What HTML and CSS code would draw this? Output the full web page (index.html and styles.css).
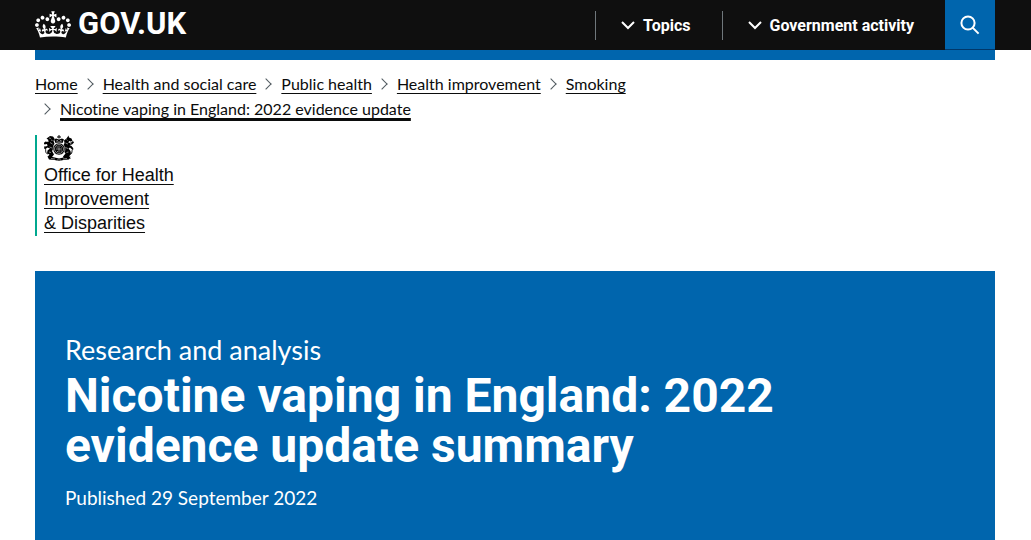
FILE: index.html
```
<!DOCTYPE html>
<html lang="en">
<head>
  <meta charset="UTF-8">
  <meta name="viewport" content="width=device-width, initial-scale=1.0">
  <title>Nicotine vaping in England: 2022 evidence update summary - GOV.UK</title>
  <link rel="stylesheet" href="styles.css">
</head>
<body>
  <header class="header">
    <div class="container header-inner">
      <a class="logo" href="#">
        <svg class="crown" viewBox="0 0 132 97" aria-hidden="true">
          <path fill="currentColor" fill-rule="evenodd" d="M25 30.2c3.5 1.5 7.7-.2 9.1-3.7 1.5-3.6-.2-7.8-3.9-9.2-3.6-1.4-7.6.3-9.1 3.9-1.4 3.5.3 7.5 3.9 9zM9 39.5c3.6 1.5 7.8-.2 9.2-3.7 1.5-3.6-.2-7.8-3.9-9.1-3.6-1.5-7.6.2-9.1 3.8-1.4 3.5.3 7.5 3.8 9zM4.4 57.2c3.5 1.5 7.7-.2 9.1-3.8 1.5-3.6-.2-7.7-3.9-9.1-3.5-1.5-7.6.3-9.1 3.8-1.4 3.5.3 7.6 3.9 9.1zm38.3-21.4c3.5 1.5 7.7-.2 9.1-3.8 1.5-3.6-.2-7.7-3.9-9.1-3.6-1.5-7.6.3-9.1 3.8-1.3 3.6.4 7.7 3.9 9.1zm64.4-5.6c-3.6 1.5-7.8-.2-9.1-3.7-1.5-3.6.2-7.8 3.8-9.2 3.6-1.4 7.7.3 9.2 3.9 1.3 3.5-.4 7.5-3.9 9zm15.9 9.3c-3.6 1.5-7.7-.2-9.1-3.7-1.5-3.6.2-7.8 3.7-9.1 3.6-1.5 7.7.2 9.2 3.8 1.5 3.5-.3 7.5-3.8 9zm4.7 17.7c-3.6 1.5-7.8-.2-9.2-3.8-1.5-3.6.2-7.7 3.9-9.1 3.6-1.5 7.7.3 9.2 3.8 1.3 3.5-.4 7.6-3.9 9.1zM89.3 35.8c-3.6 1.5-7.8-.2-9.2-3.8-1.4-3.6.2-7.7 3.9-9.1 3.6-1.5 7.7.3 9.2 3.8 1.4 3.6-.3 7.7-3.9 9.1zM69.7 17.7l8.9 4.7V9.3l-8.9 2.8c-.2-.3-.5-.6-.9-.9L72.4 0H59.6l3.5 11.2c-.3.3-.6.5-.9.9l-8.8-2.8v13.1l8.8-4.7c.3.3.6.7.9.9l-5 15.4v.1c-.2.8-.4 1.6-.4 2.4 0 4.1 3.1 7.5 7 8.1h.2c.3 0 .7.1 1 .1.4 0 .7 0 1-.1h.2c4-.6 7.1-4.1 7.1-8.1 0-.8-.1-1.7-.4-2.4V34l-5.1-15.4c.4-.2.7-.6 1-.9zM66 92.8c16.9 0 32.8 1.1 47.1 3.2 4-16.9 8.9-26.7 14-33.5l-9.6-3.4c1 4.9 1.1 7.2 0 10.2-1.5-1.4-3-4.3-4.2-8.7L108.6 76c2.8-2 5-3.2 7.5-3.3-4.4 9.4-10 11.9-13.6 11.2-4.3-.8-6.3-4.6-5.6-7.9 1-4.7 5.7-5.9 8-.5 4.3-8.7-3-11.4-7.6-8.8 7.1-7.2 7.9-13.5 2.1-21.1-8 6.1-8.1 12.3-4.5 20.8-4.7-5.4-12.1-2.5-9.5 6.2 3.4-5.2 7.9-2 7.2 3.1-.6 4.3-6.4 7.8-13.5 7.2-10.3-.9-10.9-8-11.2-13.8 2.5-.5 7.1 1.8 11 7.3L80.2 60c-4.1 4.4-8 5.3-12.3 5.4 1.4-4.4 8-11.6 8-11.6H55.5s6.4 7.2 7.9 11.6c-4.2-.1-8-1-12.3-5.4l1.4 16.4c3.9-5.5 8.5-7.7 10.9-7.3-.3 5.8-.9 12.8-11.1 13.8-7.2.6-12.9-2.9-13.5-7.2-.7-5 3.8-8.3 7.1-3.1 2.7-8.7-4.6-11.6-9.4-6.2 3.7-8.5 3.6-14.7-4.6-20.8-5.8 7.6-5 13.9 2.2 21.1-4.7-2.6-11.9.1-7.7 8.8 2.3-5.5 7.1-4.2 8.1.5.7 3.3-1.3 7.1-5.7 7.9-3.5.7-9-1.8-13.5-11.2 2.5.1 4.7 1.3 7.5 3.3l-4.7-15.4c-1.2 4.4-2.7 7.2-4.3 8.7-1.1-3-.9-5.3 0-10.2l-9.5 3.4c5 6.9 9.9 16.7 14 33.5 14.8-2.1 30.8-3.2 47.7-3.2z"/>
        </svg>
        <span>GOV.UK</span>
      </a>
      <nav class="menu" aria-label="Menu">
        <button class="menu-button" type="button">
          <svg class="chevron" viewBox="0 0 14 9" aria-hidden="true"><path d="M1 1l6 6 6-6"/></svg>
          Topics
        </button>
        <button class="menu-button" type="button">
          <svg class="chevron" viewBox="0 0 14 9" aria-hidden="true"><path d="M1 1l6 6 6-6"/></svg>
          Government activity
        </button>
        <button class="search-button" type="button" aria-label="Search GOV.UK">
          <svg class="search-icon" viewBox="0 0 20 20" aria-hidden="true">
            <circle cx="8" cy="8" r="6.6"/>
            <path d="M12.6 12.6l6 6"/>
          </svg>
        </button>
      </nav>
    </div>
  </header>

  <div class="container">
    <div class="blue-bar"></div>

    <nav class="breadcrumbs" aria-label="Breadcrumb">
      <ol>
        <li><a href="#">Home</a></li>
        <li><a href="#">Health and social care</a></li>
        <li><a href="#">Public health</a></li>
        <li><a href="#">Health improvement</a></li>
        <li><a href="#">Smoking</a></li>
        <li><a class="active" href="#">Nicotine vaping in England: 2022 evidence update</a></li>
      </ol>
    </nav>

    <main>
      <div class="organisation">
        <svg class="crest" viewBox="0 0 60 52" aria-hidden="true">
          <!-- lion -->
          <path d="M8 5l4-3 6 1 3 4-2 5 2 5-2 4 1 6-4 5 4 7-4 5H7l4-5-5-2 1-6 5-4-5-2-4 3-3-1 2-4 5-1-1-4-5 1-2-3 4-3 4 1 2-4-4-3z"/>
          <path class="cut" d="M10 6l4 1M12 15l5 3M11 24l5 2M10 34l4 1M7 12l3 1M14 10l3 1"/>
          <path class="tail" d="M7 38C1 35 5 29 2 26M2 26l-1-3"/>
          <!-- unicorn -->
          <path d="M49 1l1 4 5 2 2 5-4 1-3-1-1 4 5-1 4-3 2 3-4 4-5 1 4 2 4 5-3 2-4-4-3 2 4 5 1 6-4 5 4 4H40l-2-4 5-6-4-5 2-6-2-5 2-5-1-5 5-4z"/>
          <path class="cut" d="M45 9l2 2M43 16l5 2M43 25l5 2M45 35l4-1M52 17l3-1"/>
          <path class="tail" d="M53 39c5-4 1-7 5-11"/>
          <!-- crown -->
          <path d="M29 0h2v3h3v2h-3v2h-2V5h-3V3h3z"/>
          <path d="M20 9l4-2 6 2 6-2 4 2-3 7H23z"/>
          <path class="cut" d="M25 11h3M32 11h3M24 14h12"/>
          <!-- garter and shield -->
          <circle class="garter" cx="30" cy="28" r="12"/>
          <circle class="cut" cx="30" cy="28" r="9"/>
          <path class="cut" d="M30 21v14M24 28h12M25 24h3M33 32h3M26 32l2 2M33 23l2 2"/>
          <!-- motto -->
          <path d="M7 43l10 1 13 3 13-3 10-1-3 6-11 1-9 2-9-2-11-1z"/>
          <path class="cut" d="M14 47l8 1M26 50h8M38 48l8-1"/>
        </svg>
        <a href="#">Office for Health<br>Improvement<br>&amp; Disparities</a>
      </div>

      <div class="title-block">
        <p class="document-type">Research and analysis</p>
        <h1>Nicotine vaping in England: 2022 evidence update summary</h1>
        <p class="published">Published 29 September 2022</p>
      </div>
    </main>
  </div>
</body>
</html>
```

FILE: styles.css
```
* {
  box-sizing: border-box;
}
body {
  margin: 0;
  background: #fff;
  color: #0b0c0c;
  font-family: Lato, Arial, sans-serif;
  font-size: 16px;
  font-variant-ligatures: none;
  line-height: 25px;
}
a {
  color: inherit;
}
.container {
  margin: 0 36px 0 35px;
}

/* header */
.header {
  background: #0f0f0f;
  color: #fff;
  font-family: Roboto, Arial, sans-serif;
}
.header-inner {
  display: flex;
  justify-content: space-between;
  height: 50px;
}
.logo {
  display: flex;
  align-items: center;
  gap: 7px;
  height: 48px;
  font-size: 31px;
  font-weight: 700;
  line-height: 50px;
  text-decoration: none;
}
.crown {
  width: 36px;
  height: 27px;
}
.menu {
  display: flex;
  align-items: center;
}
.menu-button {
  display: flex;
  align-items: center;
  gap: 8px;
  height: 29px;
  padding: 0 31px 0 25px;
  border: 0;
  border-left: 1px solid #6f777b;
  background: none;
  color: inherit;
  font: inherit;
  font-weight: 700;
  cursor: pointer;
}
.chevron {
  width: 14px;
  height: 9px;
  fill: none;
  stroke: currentColor;
  stroke-width: 2;
}
.search-button {
  display: flex;
  align-items: center;
  justify-content: center;
  width: 50px;
  height: 50px;
  padding: 0;
  border: 0;
  border-bottom: 1px solid #00386a;
  background: #0065ad;
  color: inherit;
  cursor: pointer;
}
.search-icon {
  width: 20px;
  height: 20px;
  fill: none;
  stroke: currentColor;
  stroke-width: 2;
}
.blue-bar {
  height: 10px;
  background: #0065ad;
}

/* breadcrumbs */
.breadcrumbs {
  max-width: 640px;
  padding: 11px 0 14px;
}
.breadcrumbs ol {
  display: flex;
  flex-wrap: wrap;
  margin: 0;
  padding: 0;
  list-style: none;
}
.breadcrumbs li {
  display: flex;
  align-items: center;
}
.breadcrumbs li + li::before {
  content: "";
  width: 7px;
  height: 7px;
  margin: 0 11px 0 6px;
  border: solid #505a5f;
  border-width: 1px 1px 0 0;
  transform: rotate(45deg);
}
.breadcrumbs a {
  text-decoration-thickness: 1px;
  text-underline-offset: 3px;
  text-decoration-skip-ink: none;
}
.breadcrumbs .active {
  text-decoration-thickness: 3px;
}

/* organisation logo */
.organisation {
  width: 180px;
  padding: 0 0 1px 7px;
  border-left: 2px solid #00a88f;
  font-family: "Liberation Sans", Arial, sans-serif;
  font-size: 18px;
  line-height: 24px;
}
.organisation a {
  text-decoration-thickness: 1px;
  text-underline-offset: 3px;
  text-decoration-skip-ink: none;
}
.crest {
  display: block;
  width: 30px;
  height: 26px;
  margin-bottom: 2px;
}
.crest .cut,
.crest .tail {
  fill: none;
  stroke: #fff;
  stroke-width: 1;
}
.crest .tail {
  stroke: #0b0c0c;
  stroke-width: 2;
}
.crest .garter {
  stroke: #fff;
  stroke-width: 1;
}

/* title */
.title-block {
  margin-top: 35px;
  padding: 64px 30px 30px;
  background: #0065ad;
  color: #fff;
}
.title-block p,
.title-block h1 {
  margin: 0;
}
.title-block .document-type {
  font-size: 27px;
  line-height: 30px;
}
.title-block h1 {
  max-width: 760px;
  padding: 6px 0 14px;
  font-family: Roboto, Arial, sans-serif;
  font-size: 48px;
  line-height: 50px;
}
.title-block .published {
  font-size: 19px;
  line-height: 25px;
}
```
